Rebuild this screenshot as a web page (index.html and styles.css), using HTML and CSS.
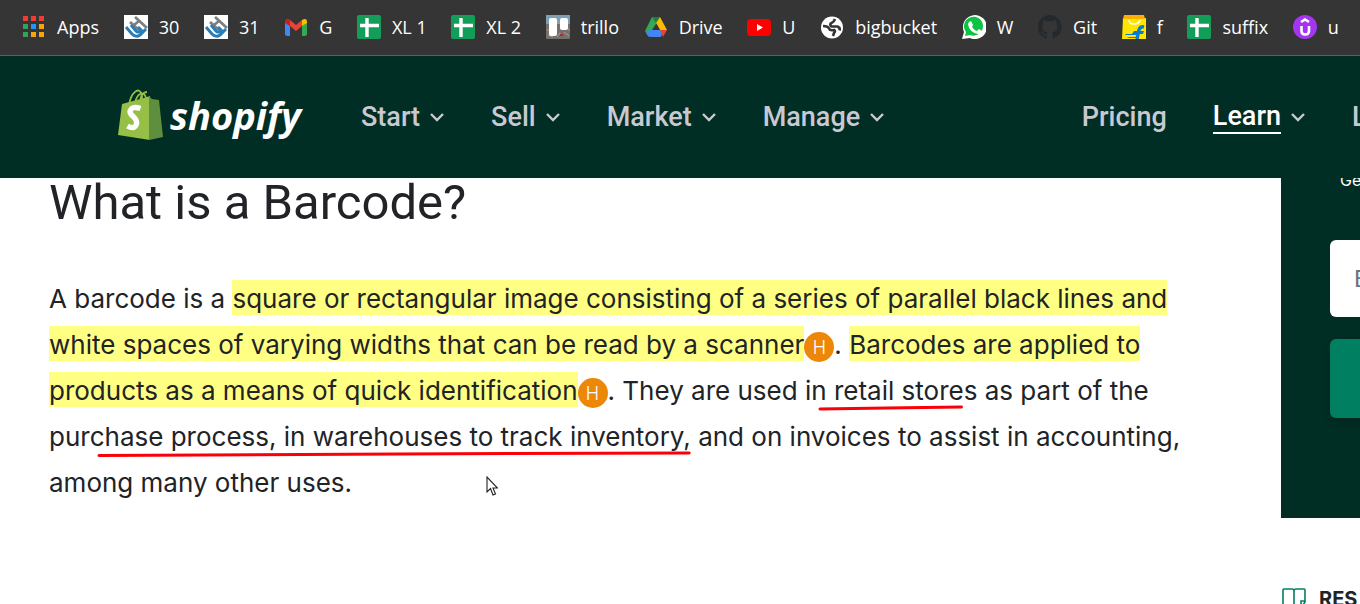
FILE: index.html
```html
<!DOCTYPE html>
<html lang="en">
<head>
<meta charset="utf-8">
<title>What is a Barcode?</title>
<link rel="stylesheet" href="styles.css">
</head>
<body>
<svg class="defs" aria-hidden="true">
  <symbol id="sheet" viewBox="0 0 24 24"><rect width="24" height="24" rx="2" fill="#129d59"/><path d="M3 10.500h19M10 3v19" stroke="#fff" stroke-width="3.400"/></symbol>
  <symbol id="hr" viewBox="0 0 24 24"><path fill="#fff" d="M0 0h24v24H0z"/><path d="M6 7l9 8M11 2l12 11M10 10l5-4" stroke="#7d7f80" stroke-width="2.800" fill="none"/><path d="M2 12l6 7q4 4 8 1l6-6M7 10l5 6q2 2 4 0l1-1-3-3" stroke="#2a7db8" stroke-width="3" fill="none"/></symbol>
  <symbol id="chevron" viewBox="0 0 16 12"><path d="M2 3l6 6 6-6" fill="none" stroke="currentColor" stroke-width="2.400"/></symbol>
</svg>
<nav class="bookmarks" aria-label="Bookmarks">
  <a href="#" class="bookmark"><svg viewBox="0 0 24 24"><path fill="#f23b32" d="M1 1h5v5H1zM9 1h5v5H9zM17 1h5v5h-5z"/><path fill="#2fa45a" d="M1 9h5v5H1zM1 17h5v5H1z"/><path fill="#2196f3" d="M9 9h5v5H9z"/><path fill="#f5a70a" d="M17 9h5v5h-5zM9 17h5v5H9zM17 17h5v5h-5z"/></svg>Apps</a>
  <a href="#" class="bookmark"><svg><use href="#hr"/></svg>30</a>
  <a href="#" class="bookmark"><svg><use href="#hr"/></svg>31</a>
  <a href="#" class="bookmark"><svg viewBox="0 0 24 24"><path fill="#4285f4" d="M1 7l5 4v10H3q-2 0-2-2z"/><path fill="#34a853" d="M18 11l5-4v12q0 2-2 2h-3z"/><path fill="#ea4335" d="M6 5l6 5 6-5v6l-6 5-6-5z"/><path fill="#c5221f" d="M1 7q0-4 4-3l1 1v6L1 8z"/><path fill="#fbbc04" d="M18 5q5-3 5 2v1l-5 3z"/></svg>G</a>
  <a href="#" class="bookmark"><svg><use href="#sheet"/></svg>XL 1</a>
  <a href="#" class="bookmark"><svg><use href="#sheet"/></svg>XL 2</a>
  <a href="#" class="bookmark"><svg viewBox="0 0 24 24"><rect width="24" height="24" rx="1" fill="#766f6a"/><path fill="#7da0b4" d="M0 0h24v9H0z"/><path d="M1 14l3 3M2 20l5 2M13 18l3 2M18 17l5 4M11 22l3-4M21 12l3 4" stroke="#aaa094"/><path fill="#a52b40" d="M14 19h3v2h-3z"/><rect x="3" y="3" width="8" height="18" rx="2" fill="#fff"/><rect x="14" y="3" width="8" height="12" rx="2" fill="#fff"/></svg>trillo</a>
  <a href="#" class="bookmark"><svg viewBox="0 0 24 24"><path fill="#34a853" d="M8 2h4l2 4L5 22l-4-6z"/><path fill="#fbbc04" d="M9 2h7l7 13h-7z"/><path fill="#188038" d="M8 2h8l-4 6z"/><path fill="#4285f4" d="M5 15h14l-2 7H7q-2 0-3-1l-2-3z"/><path fill="#ea4335" d="M16 15h7l-4 7z"/><path fill="#353535" d="M12 9l4 6H8z"/></svg>Drive</a>
  <a href="#" class="bookmark"><svg viewBox="0 0 24 24"><rect y="4" width="24" height="17" rx="4" fill="#f00"/><path fill="#fff" d="M10 9l6 3.500-6 3.500z"/></svg>U</a>
  <a href="#" class="bookmark"><svg viewBox="0 0 24 24"><circle cx="12" cy="12.500" r="11" fill="#fff"/><path d="M3 11q5 0 6 2.500t5 1.500q2 1 0 3l-1 3M15 4q-1 3-3.500 4t0 3.500h6q3 1 2 4" fill="none" stroke="#353535" stroke-width="2.600"/></svg>bigbucket</a>
  <a href="#" class="bookmark"><svg viewBox="0 0 24 24"><path fill="#fff" d="M0 24l2-7A12 12 0 1 1 8 23z"/><path fill="#0fc144" d="M3 21l1-4A9.500 9.500 0 1 1 8 20z"/><path fill="#fff" d="M7 7l2-1 2 4-1 2q2 3 5 4l2-2 3 2q0 3-4 3Q7 17 6 9z"/></svg>W</a>
  <a href="#" class="bookmark"><svg viewBox="0 0 24 24"><path fill="#24292e" d="M12 0a12 12 0 0 0-4 23.400c.6.100.8-.3.800-.6v-2.200c-3.300.7-4-1.400-4-1.400-.5-1.400-1.300-1.800-1.300-1.800-1.100-.7.100-.7.100-.7 1.200.1 1.800 1.200 1.800 1.200 1.100 1.800 2.800 1.300 3.500 1 .1-.8.400-1.300.8-1.600-2.700-.3-5.500-1.300-5.500-5.900 0-1.300.5-2.400 1.200-3.200-.1-.3-.5-1.500.1-3.200 0 0 1-.3 3.300 1.200a11.500 11.500 0 0 1 6 0c2.300-1.500 3.300-1.200 3.300-1.200.7 1.700.2 2.900.1 3.200.8.800 1.200 1.900 1.200 3.200 0 4.600-2.800 5.600-5.500 5.900.4.400.8 1.100.8 2.200v3.300c0 .3.200.7.800.6A12 12 0 0 0 12 0z"/></svg>Git</a>
  <a href="#" class="bookmark"><svg viewBox="0 0 24 24"><path fill="#ffe500" d="M1 3h23v21H0z"/><path fill="#f9b000" d="M2 0h20l1 4H1z"/><path d="M7 5q0 4 5 4t6-4" fill="none" stroke="#fff" stroke-width="1.500"/><path d="M22 12q-4-1-5 3l-2 9" fill="none" stroke="#047bd5" stroke-width="3.400"/><path fill="#047bd5" d="M12 16h10l-1 3H10zM3 19h12v1H4zM5 22h10v1H7z"/></svg>f</a>
  <a href="#" class="bookmark"><svg><use href="#sheet"/></svg>suffix</a>
  <a href="#" class="bookmark"><svg viewBox="0 0 24 24"><circle cx="12" cy="12" r="12" fill="#a435f0"/><path d="M8 7l4-2.500L16 7M8.500 11v5q0 3.500 3.700 3.500T16 16v-5" fill="none" stroke="#fff" stroke-width="2.600"/></svg>u</a>
</nav>

<header class="site-header">
  <a href="#" class="logo" aria-label="Shopify">
    <svg class="bag" viewBox="0 0 46 52"><path d="M11 16C13 3 21-2 23 4c2 3 1 6 0 9M17 14C19 4 26 1 28 9M22 13q1-10 7-10" fill="none" stroke="#95bf47" stroke-width="1.800"/><path fill="#95bf47" d="M4 15l22-6 6-2v44L0 46z"/><path fill="#5e8e3e" d="M31 7l3 3 7 1 4 37-14 3z"/><path d="M22.500 19.500q-9-3-10.500 3c0 5 8 6 6.500 12.500q-2 6-9 2" fill="none" stroke="#fff" stroke-width="5.400"/></svg>
    <span class="wordmark">shopify</span>
  </a>
  <nav class="main-nav" aria-label="Main">
    <button class="nav-item">Start<svg><use href="#chevron"/></svg></button>
    <button class="nav-item">Sell<svg><use href="#chevron"/></svg></button>
    <button class="nav-item">Market<svg><use href="#chevron"/></svg></button>
    <button class="nav-item">Manage<svg><use href="#chevron"/></svg></button>
  </nav>
  <nav class="side-nav" aria-label="Secondary">
    <a href="#" class="nav-item">Pricing</a>
    <button class="nav-item"><span class="current">Learn</span><svg><use href="#chevron"/></svg></button>
    <a href="#" class="nav-item clipped">L</a>
  </nav>
</header>

<main class="page">
  <article class="article">
    <h1>What is a Barcode?</h1>
    <p>A barcode is a <mark>square or rectangular image consisting of a series of parallel black lines and</mark><br>
    <mark>white spaces of varying widths that can be read by a scanner</mark><span class="badge">H</span>. <mark>Barcodes are applied to</mark><br>
    <mark>products as a means of quick identification</mark><span class="badge">H</span>. They are used i<span class="marked">n retail store<svg viewBox="0 0 148 6" preserveAspectRatio="none"><path d="M2 4L70 3 146 2"/></svg></span>s as part of the<br>
    pur<span class="marked">chase process, in warehouses to track inventory,<svg viewBox="0 0 592 6" preserveAspectRatio="none"><path d="M2 4.500L300 3 590 2"/></svg></span> and on invoices to assist in accounting,<br>
    among many other uses.</p>
  </article>
  <aside class="sidebar">
    <form class="signup">
      <p>Get</p>
      <input type="email" placeholder="Email" aria-label="Email">
      <button type="button" aria-label="Subscribe"></button>
    </form>
    <h2 class="resources"><svg viewBox="0 0 24 24"><path d="M12 4q0-2-2-2H2q-1 0-1 1v17h9q2 0 2 2V4q0-2 2-2h8q1 0 1 1v12l-4 6v-7h4M12 22q0-2 2-2h3" fill="none" stroke="#008060" stroke-width="1.600"/></svg>RES</h2>
  </aside>
</main>
<svg class="cursor" viewBox="0 0 12 20" aria-hidden="true"><path d="M1 1v15l3.500-3.500L7 19l2.500-1L7 12h4.500z" fill="#fff" stroke="#222" stroke-width="1.100"/></svg>
</body>
</html>
```
FILE: styles.css
```css
* { box-sizing: border-box; }

body {
  margin: 0;
  height: 100vh;
  display: flex;
  flex-direction: column;
  overflow: hidden;
  background: #fff;
  color: #212326;
  font-family: Inter, "Liberation Sans", sans-serif;
}

a { color: inherit; text-decoration: none; }
button { border: 0; padding: 0; background: none; font: inherit; color: inherit; }
.defs { position: absolute; width: 0; height: 0; }

.bookmarks {
  display: flex;
  justify-content: space-between;
  flex-shrink: 0;
  height: 56px;
  padding: 0 21px 2px 22px;
  background: #353535;
  border-bottom: 1px solid #606060;
  color: #fff;
  font-family: "Open Sans", "Noto Sans", sans-serif;
  font-size: 18px;
}

.bookmark { display: flex; align-items: center; gap: 11px; white-space: nowrap; }
.bookmark svg { width: 24px; height: 24px; }

.site-header {
  display: flex;
  align-items: center;
  flex-shrink: 0;
  position: relative;
  z-index: 1;
  height: 122px;
  padding-left: 118px;
  background: #002e25;
  color: #c9c9d3;
  font-family: Roboto, sans-serif;
  font-size: 27px;
  font-weight: 500;
}

.logo { display: flex; align-items: center; gap: 6px; width: 243px; padding-bottom: 4px; color: #fff; }
.bag { width: 46px; height: 52px; }
.wordmark { font: italic 700 38px/52px "Open Sans", sans-serif; }
.main-nav { display: flex; gap: 46px; }
.side-nav { display: flex; gap: 46px; margin-left: auto; }
.nav-item { display: flex; align-items: center; gap: 9px; white-space: nowrap; }
.nav-item svg { width: 16px; height: 12px; }
.current { color: #fff; border-bottom: 2px solid #fff; }
.clipped { width: 8px; overflow: hidden; }

.page { display: flex; flex: 1; min-height: 0; }

.article { flex: 1; padding-left: 49px; white-space: nowrap; }
.article h1 { margin: 0 0 49px; font: 400 49px/49px Roboto, sans-serif; }
.article p { margin: 0; font-size: 26px; line-height: 46px; }
.article mark { padding: 3px 0 1px; background: #ffff83; color: inherit; }

.badge {
  display: inline-block;
  width: 30px;
  height: 30px;
  border-radius: 50%;
  background: #ed8708;
  color: #fff;
  font-size: 18px;
  font-weight: 300;
  line-height: 31px;
  text-align: center;
}

.marked { position: relative; }
.marked svg { position: absolute; left: 7px; bottom: -5px; width: calc(100% - 7px); height: 6px; }
.marked path { fill: none; stroke: #fa0008; stroke-width: 3; stroke-linecap: round; }

.sidebar { width: 79px; overflow: hidden; }
.signup {
  display: flex;
  flex-direction: column;
  height: 340px;
  padding-left: 49px;
  background: #002e25;
}
.signup p { margin: -8px 0 50px 10px; color: #fff; font-size: 16px; line-height: 20px; }
.signup input {
  flex-shrink: 0;
  width: 240px;
  height: 77px;
  margin-bottom: 22px;
  padding: 0 24px;
  border: 0;
  border-radius: 6px;
  background: #fff;
  font: 24px Roboto, sans-serif;
}
.signup input::placeholder { color: #6f7477; }
.signup button {
  width: 240px;
  height: 79px;
  border-radius: 6px;
  background: #008060;
  box-shadow: 0 4px 16px rgba(0, 0, 0, 0.2);
}
.resources {
  display: flex;
  align-items: center;
  gap: 13px;
  margin: 69px 0 0 1px;
  font-size: 20px;
  line-height: 24px;
}
.resources svg { flex-shrink: 0; width: 24px; height: 24px; }

.cursor { position: absolute; left: 486px; top: 476px; width: 12px; height: 20px; }
```
